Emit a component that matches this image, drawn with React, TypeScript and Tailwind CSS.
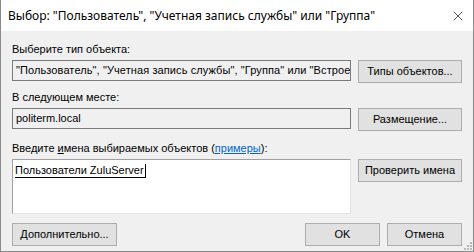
import { X } from 'lucide-react'

function Btn({ label, className = '' }: { label: string; className?: string }) {
  return (
    <button className={`h-[23px] bg-[#e1e1e1] border border-[#adadad] text-[11px] text-black leading-none ${className}`}>
      {label}
    </button>
  )
}

export default function App() {
  return (
    <div className="w-[474px] h-[252px] flex flex-col border border-[#8a8a8a] border-t-0 bg-[#f0f0f0] overflow-hidden" style={{ fontFamily: '"Liberation Sans", Arial, sans-serif' }}>
      {/* Заголовок */}
      <div className="h-[31px] bg-white flex items-center justify-between pl-[7px] pr-[7px] shrink-0">
        <span className="text-[12px] text-black" style={{ fontFamily: '"Noto Sans", sans-serif' }}>
          Выбор: "Пользователь", "Учетная запись службы" или "Группа"
        </span>
        <X size={16} strokeWidth={1} className="text-black" />
      </div>

      <div className="relative flex-1 px-[11px] pt-[12px] text-[11px] text-black">
        <div className="leading-[13px] mb-[4px]">Выберите тип объекта:</div>
        <div className="flex gap-[7px] items-start">
          <div className="w-[339px] h-[21px] border border-[#7a7a7a] bg-[#f0f0f0] flex items-center px-[3px] overflow-hidden whitespace-nowrap tracking-[0.1px]">
            "Пользователь", "Учетная запись службы", "Группа" или "Встроенный субъект безопасности"
          </div>
          <Btn label="Типы объектов..." className="w-[104px]" />
        </div>

        <div className="leading-[13px] mt-[8px] mb-[4px]">В следующем месте:</div>
        <div className="flex gap-[7px] items-start">
          <div className="w-[339px] h-[21px] border border-[#7a7a7a] bg-[#f0f0f0] flex items-center px-[3px]">
            politerm.local
          </div>
          <Btn label="Размещение..." className="w-[104px]" />
        </div>

        <div className="leading-[13px] mt-[11px] mb-[4px]">
          Введите <span className="underline">и</span>мена выбираемых объектов (<span className="text-[#0066cc] underline">примеры</span>):
        </div>
        <div className="flex gap-[7px] items-start">
          <div className="w-[339px] h-[55px] bg-white border-t border-l border-t-[#a0a0a0] border-l-[#a0a0a0] border-b border-r border-b-[#e3e3e3] border-r-[#e3e3e3] px-[2px] pt-[2px]">
            <span className="border-b border-black border-r pr-[1px] leading-[13px] inline-block">Пользователи ZuluServer</span>
          </div>
          <Btn label="Проверить имена" className="w-[104px]" />
        </div>

        <div className="flex justify-between mt-[9px]">
          <Btn label="Дополнительно..." className="w-[105px]" />
          <div className="flex gap-[7px]">
            <Btn label="OK" className="w-[75px]" />
            <Btn label="Отмена" className="w-[75px]" />
          </div>
        </div>

        {/* уголок изменения размера */}
        <svg className="absolute right-[1px] bottom-[1px]" width="9" height="9" viewBox="0 0 9 9">
          {[[7, 1], [4, 4], [7, 4], [1, 7], [4, 7], [7, 7]].map(([x, y], i) => (
            <rect key={i} x={x} y={y} width="2" height="2" fill="#b8b8b8" />
          ))}
        </svg>
      </div>
    </div>
  )
}
